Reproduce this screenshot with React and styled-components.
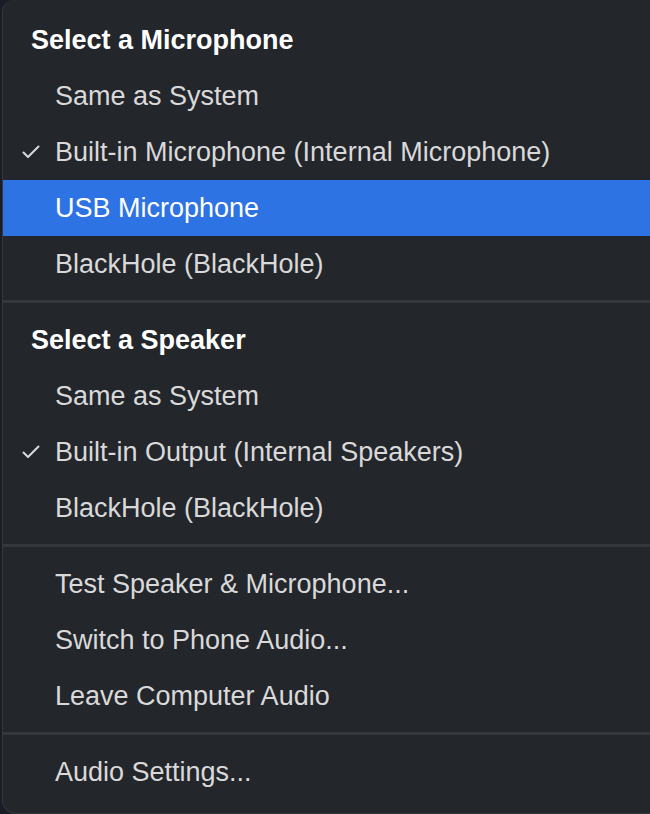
import React from "react";
import styled, { createGlobalStyle } from "styled-components";

const GlobalStyle = createGlobalStyle`
  html, body {
    margin: 0;
    padding: 0;
    background: #1b1d26;
    overflow: hidden;
  }
  body {
    font-family: "Liberation Sans", Arial, sans-serif;
  }
`;

const sections = [
  {
    title: "Select a Microphone",
    items: [
      { label: "Same as System" },
      { label: "Built-in Microphone (Internal Microphone)", checked: true },
      { label: "USB Microphone", active: true },
      { label: "BlackHole (BlackHole)" },
    ],
  },
  {
    title: "Select a Speaker",
    items: [
      { label: "Same as System" },
      { label: "Built-in Output (Internal Speakers)", checked: true },
      { label: "BlackHole (BlackHole)" },
    ],
  },
  {
    items: [
      { label: "Test Speaker & Microphone..." },
      { label: "Switch to Phone Audio..." },
      { label: "Leave Computer Audio" },
    ],
  },
  {
    items: [{ label: "Audio Settings..." }],
  },
];

const Check = () => (
  <svg width="18" height="14" viewBox="0 0 18 14" fill="none">
    <path
      d="M1.5 7.5 L6 12 L16.5 1.5"
      stroke="#d9d9da"
      strokeWidth="2"
      strokeLinecap="round"
      strokeLinejoin="round"
    />
  </svg>
);

const App = () => {
  return (
    <>
      <GlobalStyle />
      <Menu>
        {sections.map((section, i) => (
          <React.Fragment key={i}>
            {i > 0 && <Separator />}
            {section.title && <Header>{section.title}</Header>}
            {section.items.map((item) => (
              <Item key={item.label} active={item.active}>
                <CheckSlot>{item.checked && <Check />}</CheckSlot>
                {item.label}
              </Item>
            ))}
          </React.Fragment>
        ))}
      </Menu>
    </>
  );
};

const Menu = styled.div`
  margin-left: 2px;
  width: 660px;
  height: 814px;
  box-sizing: border-box;
  padding-top: 12px;
  background: #23262b;
  border-left: 1px solid #363940;
  border-bottom: 1px solid #363940;
  border-radius: 12px 0 0 14px;
  display: flex;
  flex-direction: column;
`;

const Header = styled.div`
  height: 56px;
  display: flex;
  align-items: center;
  padding-left: 28px;
  font-size: 27px;
  font-weight: 700;
  color: #ffffff;
`;

const Item = styled.div`
  height: 56px;
  display: flex;
  align-items: center;
  font-size: 27px;
  color: ${({ active }) => (active ? "#ffffff" : "#d9d9da")};
  background: ${({ active }) => (active ? "#2e73e3" : "transparent")};
`;

const CheckSlot = styled.span`
  width: 52px;
  padding-left: 19px;
  box-sizing: border-box;
  display: flex;
  align-items: center;
`;

const Separator = styled.div`
  height: 3px;
  margin: 8px 0 9px;
  background: #34373c;
`;

export default App;
